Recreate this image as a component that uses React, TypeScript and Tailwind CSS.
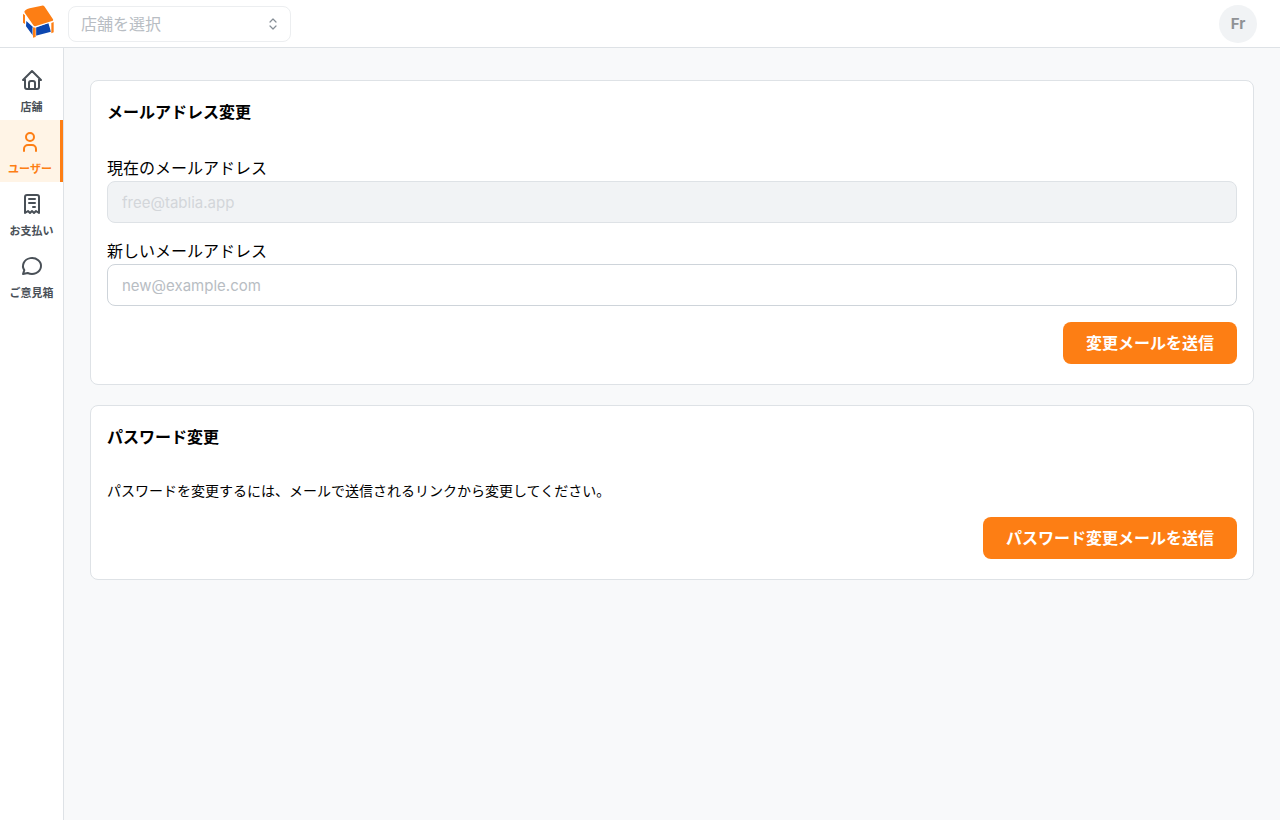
import type { ReactNode } from "react";

const USER_EMAIL = "free@tablia.app";

type NavItem = {
  label: string;
  href: string;
  icon: ReactNode;
  active?: boolean;
};

const NAV_ITEMS: NavItem[] = [
  {
    label: "店舗",
    href: "#shops",
    icon: (
      <>
        <path d="M5 12H3l9-9 9 9h-2" />
        <path d="M5 12v7a2 2 0 0 0 2 2h10a2 2 0 0 0 2-2v-7" />
        <path d="M9 21v-6a2 2 0 0 1 2-2h2a2 2 0 0 1 2 2v6" />
      </>
    ),
  },
  {
    label: "ユーザー",
    href: "#user",
    active: true,
    icon: (
      <>
        <circle cx="12" cy="7" r="4" />
        <path d="M6 21v-2a4 4 0 0 1 4-4h4a4 4 0 0 1 4 4v2" />
      </>
    ),
  },
  {
    label: "お支払い",
    href: "#payment",
    icon: (
      <path d="M5 21V5a2 2 0 0 1 2-2h10a2 2 0 0 1 2 2v16l-3-2-2 2-2-2-2 2-2-2-3 2M9 7h6m-6 4h6m-2 4h2" />
    ),
  },
  {
    label: "ご意見箱",
    href: "#feedback",
    icon: <path d="M3 20l1.3-3.9a9 8 0 1 1 3.4 2.9L3 20" />,
  },
];

function Logo() {
  return (
    <svg viewBox="66 16 99 99" className="mb-1 size-[33px]" aria-hidden="true">
      <path fill="#0d47b0" d="M79 64l20 18v26L78 80zM107 84l38-14 8 26-46 12z" />
      <path
        fill="#fd7e14"
        stroke="#fff"
        strokeWidth="6"
        paintOrder="stroke"
        d="M74 39q-3-5 3-8 4-3 12-5l36-8q6-1 9 3l24 36q4 5-2 7l-48 15q-5 2-8-2z"
      />
      <path
        fill="#fd7e14"
        stroke="#fff"
        strokeWidth="3"
        paintOrder="stroke"
        d="M69 42l6 5v26l-6-4zM99 83l8 1v28l-8 2zM154 70l7-3v31l-7 3z"
      />
    </svg>
  );
}

function StoreSelect() {
  return (
    <div className="relative">
      <select
        aria-label="店舗を選択"
        defaultValue=""
        className="h-9 w-[223px] appearance-none rounded-lg border border-[#eceef0] bg-white px-3 text-base text-[#b8bdc3]"
      >
        <option value="">店舗を選択</option>
      </select>
      <svg
        viewBox="0 0 10 14"
        className="pointer-events-none absolute top-[11px] right-[13px] h-3.5 w-2.5"
        fill="none"
        stroke="#868e96"
        strokeWidth="1.2"
        strokeLinecap="round"
        strokeLinejoin="round"
        aria-hidden="true"
      >
        <path d="M2 5l3-3 3 3M2 9l3 3 3-3" />
      </svg>
    </div>
  );
}

function Header() {
  return (
    <header className="flex h-12 items-center justify-between border-b border-[#dee2e6] bg-white pr-[23px] pl-[22px]">
      <div className="flex items-center gap-[13px]">
        <Logo />
        <StoreSelect />
      </div>
      <button
        type="button"
        className="size-[38px] rounded-full bg-[#f1f3f5] pt-0.5 text-[15px] font-bold text-[#909296]"
      >
        Fr
      </button>
    </header>
  );
}

function Sidebar() {
  return (
    <nav className="w-16 shrink-0 border-r border-[#dee2e6] bg-white pt-2.5">
      {NAV_ITEMS.map((item) => (
        <a
          key={item.label}
          href={item.href}
          className={
            item.active
              ? "flex h-[62px] flex-col items-center gap-1.5 border-r-3 border-[#fd7e14] bg-[#fff4e6] pt-2.5 text-[#fd7e14]"
              : "flex h-[62px] flex-col items-center gap-1.5 pt-2.5 text-[#495057]"
          }
        >
          <svg
            viewBox="0 0 24 24"
            className="size-6"
            fill="none"
            stroke="currentColor"
            strokeWidth="2"
            strokeLinecap="round"
            strokeLinejoin="round"
            aria-hidden="true"
          >
            {item.icon}
          </svg>
          <span className="text-[11px] leading-[18px] font-bold whitespace-nowrap">
            {item.label}
          </span>
        </a>
      ))}
    </nav>
  );
}

function Card({ title, children }: { title: string; children: ReactNode }) {
  return (
    <section className="rounded-lg border border-[#dee2e6] bg-white px-4 pt-[18px] pb-5">
      <h2 className="mb-[30px] text-base leading-[27px] font-bold">{title}</h2>
      {children}
    </section>
  );
}

function SubmitButton({ children }: { children: ReactNode }) {
  return (
    <div className="mt-4 flex justify-end">
      <button
        type="submit"
        className="h-[42px] rounded-lg bg-[#fd7e14] px-[23px] text-base font-bold text-white"
      >
        {children}
      </button>
    </div>
  );
}

export default function App() {
  return (
    <div className="flex min-h-screen flex-col bg-[#f8f9fa] font-[Inter,'Noto_Sans_CJK_JP',sans-serif] text-black">
      <Header />
      <div className="flex flex-1">
        <Sidebar />
        <main className="flex flex-1 flex-col gap-5 px-[26px] py-8">
          <Card title="メールアドレス変更">
            <form>
              <label htmlFor="current-email" className="block leading-[25px]">
                現在のメールアドレス
              </label>
              <input
                id="current-email"
                type="email"
                placeholder={USER_EMAIL}
                disabled
                className="block h-[42px] w-full rounded-lg border border-[#dee2e6] bg-[#f1f3f5] px-3.5 text-[15px] placeholder:text-[#d3d6da]"
              />
              <label
                htmlFor="new-email"
                className="mt-4 block leading-[25px]"
              >
                新しいメールアドレス
              </label>
              <input
                id="new-email"
                type="email"
                placeholder="new@example.com"
                className="block h-[42px] w-full rounded-lg border border-[#ced4da] bg-white px-3.5 text-[15px] placeholder:text-[#b8bdc3]"
              />
              <SubmitButton>変更メールを送信</SubmitButton>
            </form>
          </Card>
          <Card title="パスワード変更">
            <form>
              <p className="text-sm leading-5">
                パスワードを変更するには、メールで送信されるリンクから変更してください。
              </p>
              <SubmitButton>パスワード変更メールを送信</SubmitButton>
            </form>
          </Card>
        </main>
      </div>
    </div>
  );
}
